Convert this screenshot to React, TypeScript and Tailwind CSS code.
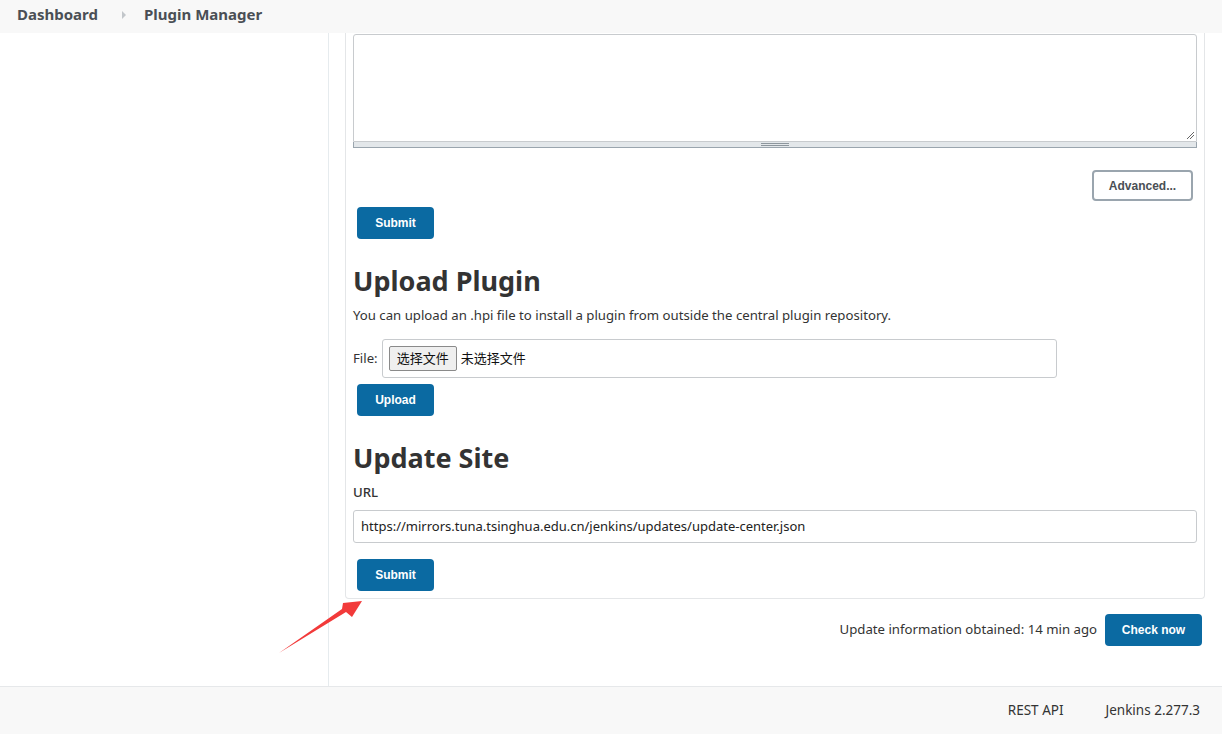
import React from "react";

const font = { fontFamily: '"Noto Sans", "Noto Sans CJK SC", sans-serif' };
const btnFont = { fontFamily: '"Liberation Sans", Arial, sans-serif' };

function BlueButton({ children, className = "" }: { children: React.ReactNode; className?: string }) {
  return (
    <button
      style={btnFont}
      className={`h-[32px] rounded-[4px] bg-[#0b6aa2] text-[12px] font-bold text-white ${className}`}
    >
      {children}
    </button>
  );
}

export default function App() {
  return (
    <div style={font} className="relative flex h-[734px] w-[1222px] flex-col overflow-hidden bg-white text-[#333]">
      {/* breadcrumb header */}
      <div className="flex h-[33px] shrink-0 items-center bg-[#f8f8f8] pb-[4px] pl-[17px] text-[15px] font-bold text-[#4a4f55]">
        <span>Dashboard</span>
        <svg width="6" height="8" viewBox="0 0 6 8" className="ml-[23px] mr-[17px]">
          <path d="M1 0 L5 4 L1 8 Z" fill="#c2c6ca" />
        </svg>
        <span>Plugin Manager</span>
      </div>

      <div className="flex min-h-0 flex-1">
        <div className="w-[329px] shrink-0 border-r border-[#e6ebee]" />
        <div className="flex flex-1 flex-col pl-[16px] pr-[17px]">
          {/* card */}
          <div className="rounded-b-[4px] border-x border-b border-[#e4e6e8] px-[7px] pb-[7px]">
            <div className="mt-px">
              <div className="relative h-[108px] rounded-t-[3px] border border-[#c8cbce] bg-white">
                <svg width="10" height="10" viewBox="0 0 10 10" className="absolute bottom-[1px] right-[1px]">
                  <path d="M9 2 L2 9 M9 5 L5 9" stroke="#666" strokeWidth="1" />
                </svg>
              </div>
              <div className="flex h-[6px] items-center justify-center border-x border-b border-[#9aa5ae] bg-[#e3e7ea]">
                <div className="flex w-[28px] flex-col gap-[1px]">
                  <div className="h-px bg-[#8d969d]" />
                  <div className="h-px bg-[#8d969d]" />
                </div>
              </div>
            </div>

            <div className="mt-[22px] flex justify-end pr-[4px]">
              <button
                style={btnFont}
                className="h-[31px] w-[101px] rounded-[4px] border-2 border-[#9aa5ae] bg-white text-[12px] font-bold text-[#4a4f55]"
              >
                Advanced...
              </button>
            </div>
            <div className="mt-[6px] pl-[4px]">
              <BlueButton className="w-[77px]">Submit</BlueButton>
            </div>

            <h2 className="mt-[25px] text-[27px] font-bold leading-[34px] text-[#333]">Upload Plugin</h2>
            <p className="mt-[7px] text-[13.2px] leading-[20px]">
              You can upload an .hpi file to install a plugin from outside the central plugin repository.
            </p>
            <div className="mt-[14px] flex items-center">
              <span className="mr-[4px] text-[13.2px]">File:</span>
              <div className="flex h-[39px] w-[675px] items-center rounded-[3px] border border-[#c8cbce] px-[6px]">
                <span className="flex h-[25px] items-center rounded-[2px] border border-[#8a8a8a] bg-[#efefef] px-[7px] text-[13px] text-[#111]">
                  选择文件
                </span>
                <span className="ml-[4px] text-[13px] text-[#111]">未选择文件</span>
              </div>
            </div>
            <div className="mt-[6px] pl-[4px]">
              <BlueButton className="w-[77px]">Upload</BlueButton>
            </div>

            <h2 className="mt-[25px] text-[27px] font-bold leading-[34px] text-[#333]">Update Site</h2>
            <div className="mt-[7px] text-[13.2px] font-medium leading-[20px]">URL</div>
            <div className="mt-[8px] flex h-[33px] items-center rounded-[3px] border border-[#c8cbce] px-[7px] text-[13px] text-[#222]">
              https://mirrors.tuna.tsinghua.edu.cn/jenkins/updates/update-center.json
            </div>
            <div className="mt-[16px] pl-[4px]">
              <BlueButton className="w-[77px]">Submit</BlueButton>
            </div>
          </div>

          <div className="mt-[15px] flex items-center justify-end">
            <span className="mr-[8px] text-[13.2px] text-[#333]">Update information obtained: 14 min ago</span>
            <BlueButton className="mr-[3px] w-[97px]">Check now</BlueButton>
          </div>
        </div>
      </div>

      {/* footer */}
      <div className="flex h-[48px] shrink-0 items-center justify-end border-t border-[#e6e8ea] bg-[#f8f8f8] pr-[22px] text-[13.5px] text-[#333]">
        <span className="mr-[42px]">REST API</span>
        <span>Jenkins 2.277.3</span>
      </div>

      {/* annotation arrow */}
      <svg className="pointer-events-none absolute left-[270px] top-[595px]" width="96" height="64" viewBox="0 0 96 64">
        <path d="M9 58 L72 14 L73 8 L92 6 L82 22 L76 17 Z" fill="#f23a3a" />
      </svg>
    </div>
  );
}
